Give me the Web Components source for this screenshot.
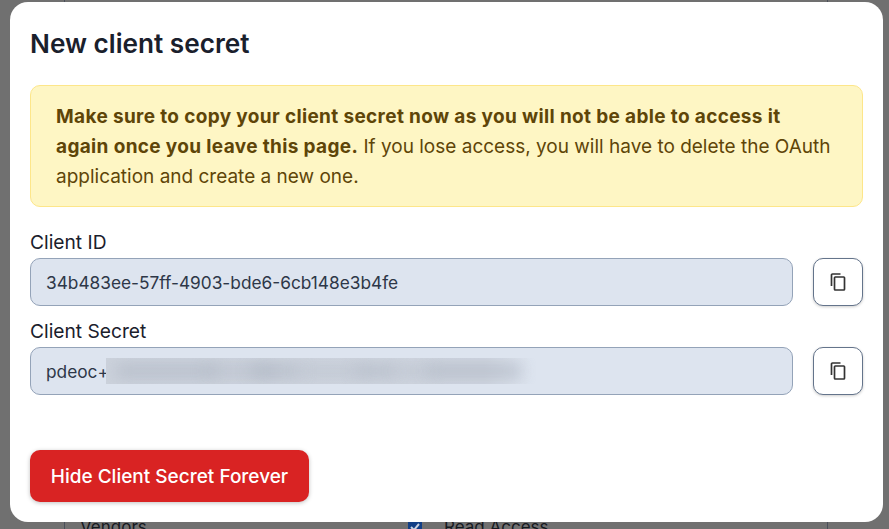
<!DOCTYPE html>
<html>
<head>
<meta charset="utf-8">
<title>New client secret</title>
<style>
  html, body { margin: 0; height: 100%; overflow: hidden; }
  body { font-family: Inter, "Liberation Sans", sans-serif; }
</style>
</head>
<body>
<page-backdrop></page-backdrop>
<secret-modal heading="New client secret">
  <warn-box>
    <b>Make sure to copy your client secret now as you will not be able to access it<br>again once you leave this page.</b>
    If you lose access, you will have to delete the OAuth application and create a new one.
  </warn-box>
  <copy-field label="Client ID" value="34b483ee-57ff-4903-bde6-6cb148e3b4fe"></copy-field>
  <copy-field label="Client Secret" value="pdeoc+" blurred></copy-field>
  <danger-button>Hide Client Secret Forever</danger-button>
</secret-modal>

<script>
class PageBackdrop extends HTMLElement {
    constructor() {
        super();
        this.attachShadow({ mode: 'open' });
    }

    connectedCallback() {
        this.shadowRoot.innerHTML = `
        <style>
            :host {
                position: absolute;
                inset: 0;
                display: block;
                background: #707070;
                overflow: hidden;
                color: #16191f;
                font-size: 17px;
            }
            .line {
                position: absolute;
                top: 0;
                bottom: 0;
                width: 1px;
                background: #4a4f5a;
            }
            .text { position: absolute; top: 516px; line-height: 22px; }
            .check {
                position: absolute;
                left: 408px;
                top: 522px;
                width: 14px;
                height: 14px;
                background: #123f86;
            }
            svg { position: absolute; left: 1px; top: 0; }
        </style>
        <div class="line" style="left:64px"></div>
        <div class="line" style="left:827px"></div>
        <div class="text" style="left:80px">Vendors</div>
        <div class="check">
            <svg width="12" height="12" viewBox="0 0 12 12" fill="none" stroke="#c9d2e0" stroke-width="2"><path d="M2 5l3 3 5-6"/></svg>
        </div>
        <div class="text" style="left:444px">Read Access</div>
        `;
    }
}

class SecretModal extends HTMLElement {
    constructor() {
        super();
        this.attachShadow({ mode: 'open' });
    }

    connectedCallback() {
        this.shadowRoot.innerHTML = `
        <style>
            :host {
                position: absolute;
                left: 10px;
                top: 2px;
                width: 873px;
                height: 520px;
                box-sizing: border-box;
                display: flex;
                flex-direction: column;
                padding: 0 20px 20px;
                background: #fff;
                border-radius: 18px;
                color: #1a202c;
            }
            h2 {
                margin: 0;
                padding-top: 24px;
                height: 83px;
                box-sizing: border-box;
                font-size: 26.2px;
                line-height: 36px;
                font-weight: 600;
            }
        </style>
        <h2>${this.getAttribute("heading")}</h2>
        <slot></slot>
        `;
    }
}

class WarnBox extends HTMLElement {
    constructor() {
        super();
        this.attachShadow({ mode: 'open' });
        this.shadowRoot.innerHTML = `
        <style>
            :host {
                display: block;
                box-sizing: border-box;
                height: 122px;
                padding: 16px 25px 14px;
                margin-bottom: 23px;
                background: #fef6c4;
                border: 1px solid #fde68a;
                border-radius: 10px;
                color: #5e4508;
                font-size: 19px;
                line-height: 30px;
            }
            ::slotted(b) {
                font-weight: 700;
                letter-spacing: 0.35px;
            }
        </style>
        <slot></slot>
        `;
    }
}

class CopyField extends HTMLElement {
    constructor() {
        super();
        this.attachShadow({ mode: 'open' });
    }

    connectedCallback() {
        const blur = this.hasAttribute("blurred") ? `
            <span class="mask">
                <i style="left:10px;width:100px;opacity:.8"></i>
                <i style="left:100px;width:70px;opacity:.55"></i>
                <i style="left:145px;width:50px;opacity:.75"></i>
                <i style="left:195px;width:60px;opacity:.45"></i>
                <i style="left:250px;width:40px;opacity:.8"></i>
                <i style="left:290px;width:35px;opacity:.45"></i>
                <i style="left:320px;width:95px;opacity:.85"></i>
            </span>` : "";

        this.shadowRoot.innerHTML = `
        <style>
            :host {
                display: block;
                margin-bottom: 13px;
            }
            label {
                display: block;
                height: 24px;
                margin-bottom: 4px;
                font-size: 19.2px;
                line-height: 24px;
                color: #1a202c;
            }
            .row {
                display: flex;
                gap: 20px;
            }
            .value {
                flex: 1;
                position: relative;
                display: flex;
                align-items: center;
                height: 48px;
                box-sizing: border-box;
                padding: 0 15px;
                background: #dde4ef;
                border: 1px solid #94a3b8;
                border-radius: 10px;
                font-size: 17.3px;
                color: #2d3748;
                overflow: hidden;
            }
            .mask {
                position: absolute;
                left: 75px;
                top: 10px;
                width: 430px;
                height: 26px;
                overflow: hidden;
                background: linear-gradient(90deg, #ccd2dc 0, #d0d6e0 88%, #dde4ef 99%);
            }
            .mask i {
                position: absolute;
                top: 8px;
                height: 10px;
                background: #aab2bf;
                filter: blur(8px);
            }
            button {
                width: 50px;
                height: 48px;
                padding: 0;
                display: flex;
                align-items: center;
                justify-content: center;
                background: #fff;
                border: 1px solid #64748b;
                border-radius: 10px;
                box-shadow: 0 1px 3px rgba(0,0,0,0.2);
            }
        </style>
        <label>${this.getAttribute("label")}</label>
        <div class="row">
            <div class="value">${this.getAttribute("value")}${blur}</div>
            <button aria-label="Copy">
                <svg width="16" height="18" viewBox="0 0 16 18" fill="none" stroke="#333" stroke-width="1.7">
                    <path d="M1.5 13V2A1 1 0 0 1 2.5 1H10.5"/>
                    <rect x="4.5" y="4" width="10" height="13" rx="0.8"/>
                </svg>
            </button>
        </div>
        `;
    }
}

class DangerButton extends HTMLElement {
    constructor() {
        super();
        this.attachShadow({ mode: 'open' });
        this.shadowRoot.innerHTML = `
        <style>
            :host {
                display: block;
                margin-top: auto;
                align-self: flex-start;
            }
            button {
                width: 279px;
                height: 52px;
                padding: 0;
                border: none;
                border-radius: 10px;
                background: #d92323;
                color: #fff;
                font: 500 19px Inter, "Liberation Sans", sans-serif;
                box-shadow: 0 1px 4px rgba(0,0,0,0.25);
            }
        </style>
        <button><slot></slot></button>
        `;
    }
}

customElements.define("page-backdrop", PageBackdrop);
customElements.define("secret-modal", SecretModal);
customElements.define("warn-box", WarnBox);
customElements.define("copy-field", CopyField);
customElements.define("danger-button", DangerButton);
</script>
</body>
</html>
